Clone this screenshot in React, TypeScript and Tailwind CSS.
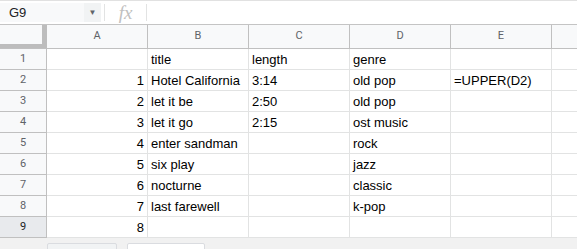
import React from "react";

const cols = ["A", "B", "C", "D", "E"];
const rows: string[][] = [
  ["", "title", "length", "genre", ""],
  ["1", "Hotel California", "3:14", "old pop", "=UPPER(D2)"],
  ["2", "let it be", "2:50", "old pop", ""],
  ["3", "let it go", "2:15", "ost music", ""],
  ["4", "enter sandman", "", "rock", ""],
  ["5", "six play", "", "jazz", ""],
  ["6", "nocturne", "", "classic", ""],
  ["7", "last farewell", "", "k-pop", ""],
  ["8", "", "", "", ""],
];

export default function App() {
  return (
    <div className="w-[577px] h-[249px] overflow-hidden bg-white flex flex-col" style={{ fontFamily: '"Liberation Sans", Arial, sans-serif' }}>
      {/* formula bar */}
      <div className="h-[25px] shrink-0 flex items-stretch border-t border-b border-t-[#e1e1e1] border-b-[#c4c4c4]">
        <div className="w-[84px] bg-[#f8f9fa] flex items-center pl-[9px] text-[13px] text-[#202124] my-[2px]">G9</div>
        <div className="w-[17px] bg-[#f1f3f4] flex items-center justify-center my-[2px] text-[8px] text-[#5f6368]">▼</div>
        <div className="w-[1px] bg-[#e2e3e3] my-[3px] ml-[3px]"></div>
        <div className="w-[41px] flex items-center justify-center text-[#c0c0c0] italic text-[19px] leading-none" style={{ fontFamily: '"Liberation Serif", serif' }}>fx</div>
        <div className="w-[1px] bg-[#e2e3e3] my-[3px]"></div>
        <div className="flex-1"></div>
      </div>
      {/* column headers */}
      <div className="h-[24px] shrink-0 flex bg-[#f8f9fa] border-b border-[#c0c0c0]">
        <div className="w-[47px] shrink-0 border-r-[5px] border-b-[4px] border-[#bdbdbd] h-[23px]"></div>
        {cols.map((c) => (
          <div key={c} className="w-[101px] shrink-0 border-r border-[#c0c0c0] flex items-center justify-center text-[11px] text-[#5f6368]" style={{ fontFamily: 'Roboto, "Liberation Sans", sans-serif' }}>
            {c}
          </div>
        ))}
        <div className="flex-1"></div>
      </div>
      {/* rows */}
      {rows.map((r, i) => (
        <div key={i} className="h-[21px] shrink-0 flex border-b border-[#e2e3e3]">
          <div
            className={`w-[47px] shrink-0 border-r border-[#c0c0c0] flex items-center justify-center text-[11px] -mb-[1px] border-b ${i === 8 ? "bg-[#e8eaed] text-[#202124] border-b-[#c0c0c0]" : "bg-[#f8f9fa] text-[#5f6368] border-b-[#c0c0c0]"}`}
            style={{ fontFamily: 'Roboto, "Liberation Sans", sans-serif' }}
          >
            {i + 1}
          </div>
          {r.map((v, j) => (
            <div
              key={j}
              className={`w-[101px] shrink-0 border-r border-[#e2e3e3] flex items-end pb-[1px] px-[3px] text-[13px] leading-[17px] text-black whitespace-nowrap overflow-hidden ${j === 0 ? "justify-end" : "justify-start"}`}
            >
              {v}
            </div>
          ))}
          <div className="flex-1"></div>
        </div>
      ))}
      {/* footer */}
      <div className="flex-1 bg-[#f1f1f1] flex items-start pt-[5px] gap-[10px] pl-[47px]">
        <div className="w-[70px] h-[10px] bg-[#f1f3f4] border border-[#dadce0] rounded-t-[2px]"></div>
        <div className="w-[78px] h-[10px] bg-white border border-[#dadce0] rounded-t-[2px]"></div>
      </div>
    </div>
  );
}
